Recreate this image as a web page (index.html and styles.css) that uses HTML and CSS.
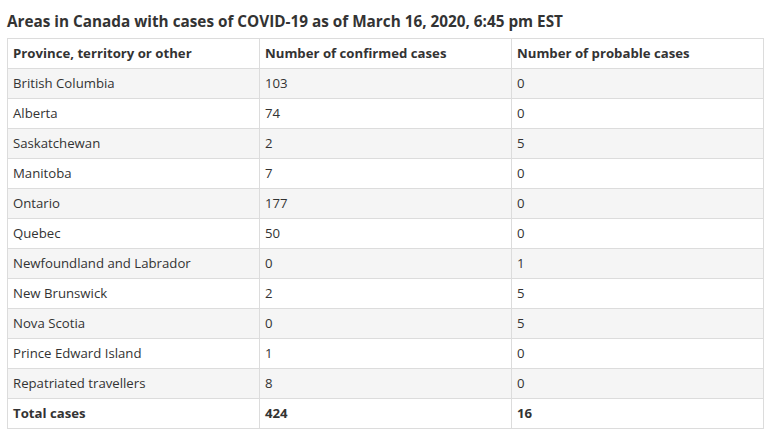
FILE: index.html
```html
<!DOCTYPE html>
<html>
<head>
<meta charset="utf-8">
<link rel="stylesheet" href="styles.css">
</head>
<body>
<div class="page">
  <h2 class="title">Areas in Canada with cases of COVID-19 as of March 16, 2020, 6:45 pm EST</h2>
  <table class="cases">
    <thead>
      <tr><th>Province, territory or other</th><th>Number of confirmed cases</th><th>Number of probable cases</th></tr>
    </thead>
    <tbody>
      <tr><td>British Columbia</td><td>103</td><td>0</td></tr>
      <tr><td>Alberta</td><td>74</td><td>0</td></tr>
      <tr><td>Saskatchewan</td><td>2</td><td>5</td></tr>
      <tr><td>Manitoba</td><td>7</td><td>0</td></tr>
      <tr><td>Ontario</td><td>177</td><td>0</td></tr>
      <tr><td>Quebec</td><td>50</td><td>0</td></tr>
      <tr><td>Newfoundland and Labrador</td><td>0</td><td>1</td></tr>
      <tr><td>New Brunswick</td><td>2</td><td>5</td></tr>
      <tr><td>Nova Scotia</td><td>0</td><td>5</td></tr>
      <tr><td>Prince Edward Island</td><td>1</td><td>0</td></tr>
      <tr><td>Repatriated travellers</td><td>8</td><td>0</td></tr>
      <tr class="total"><td>Total cases</td><td>424</td><td>16</td></tr>
    </tbody>
  </table>
</div>
</body>
</html>
```
FILE: styles.css
```css
html, body {
  margin: 0;
  padding: 0;
  background: #fff;
}
.page {
  padding: 11px 9px 0 7px;
  font-family: "Open Sans", "Noto Sans", sans-serif;
  color: #333;
}
.title {
  margin: 0 0 7px 0;
  font-size: 15.3px;
  line-height: 20px;
  font-weight: 700;
  color: #333;
}
.cases {
  width: 757px;
  border-collapse: collapse;
  table-layout: fixed;
  font-size: 13.2px;
}
.cases th,
.cases td {
  border: 1px solid #dcdcdc;
  height: 30px;
  padding: 0 5px 1px;
  text-align: left;
  vertical-align: middle;
  line-height: 18px;
  box-sizing: border-box;
}
.cases th {
  font-weight: 700;
}
.cases tbody tr:nth-child(odd) {
  background: #f5f5f5;
}
.cases tr.total td {
  font-weight: 700;
}
```
